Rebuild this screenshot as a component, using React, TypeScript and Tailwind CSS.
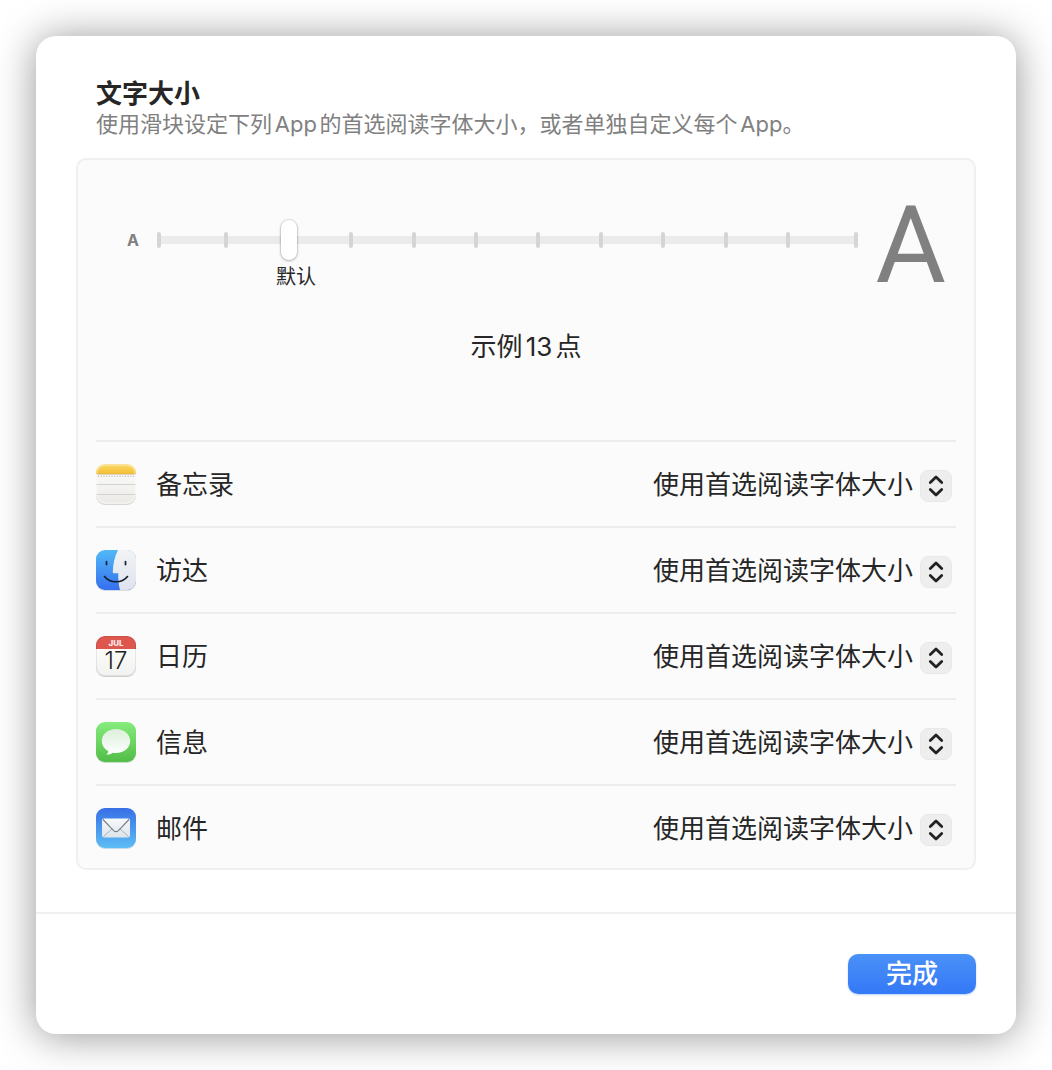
import { useState, type ReactNode } from "react";

function NotesIcon() {
  return (
    <svg viewBox="0 1 40 42" className="h-[42px] w-10 shrink-0" aria-hidden="true">
      <defs>
        <linearGradient id="notes-top" x1="0" y1="0" x2="0" y2="1">
          <stop offset="0" stopColor="#fad96b" />
          <stop offset="1" stopColor="#f6c033" />
        </linearGradient>
        <linearGradient id="notes-paper" x1="0" y1="0" x2="0" y2="1">
          <stop offset="0" stopColor="#fdfdfc" />
          <stop offset="1" stopColor="#ebeae7" />
        </linearGradient>
        <clipPath id="notes-clip">
          <rect x="0" y="1" width="40" height="40" rx="9" />
        </clipPath>
      </defs>
      <rect x="0" y="2" width="40" height="40" rx="9" fill="#d6d6d4" />
      <g clipPath="url(#notes-clip)">
        <rect y="1" width="40" height="40" fill="url(#notes-paper)" />
        <rect y="1" width="40" height="10" fill="url(#notes-top)" />
        <rect y="10.7" width="40" height="0.7" fill="#c4a565" />
        <path d="M2 13.2H40" stroke="#a3a3a1" strokeWidth="1" strokeDasharray="1 1.7" />
        <path d="M0 21.5H40M0 31.5H40" stroke="#d3d2cf" strokeWidth="1" />
        <rect x="1" y="2" width="38" height="38" rx="8" fill="none" stroke="#fff" strokeOpacity="0.6" />
      </g>
    </svg>
  );
}

function FinderIcon() {
  return (
    <svg viewBox="0 1 40 42" className="h-[42px] w-10 shrink-0" aria-hidden="true">
      <defs>
        <linearGradient id="finder-left" x1="0" y1="0" x2="0" y2="1">
          <stop offset="0" stopColor="#52b9f8" />
          <stop offset="1" stopColor="#356fee" />
        </linearGradient>
        <linearGradient id="finder-right" x1="0" y1="0" x2="0" y2="1">
          <stop offset="0" stopColor="#f2f3f5" />
          <stop offset="1" stopColor="#dfe3ee" />
        </linearGradient>
        <clipPath id="finder-clip">
          <rect x="0" y="1" width="40" height="40" rx="9" />
        </clipPath>
      </defs>
      <rect x="0" y="2" width="40" height="40" rx="9" fill="#d9dbe2" />
      <g clipPath="url(#finder-clip)">
        <rect y="1" width="40" height="40" fill="url(#finder-left)" />
        <path
          d="M22 1C18.5 8 17 15 16.8 23.3Q16.8 24.2 17.7 24.2H22.3C22.1 30 22.6 36 24 41H40V1Z"
          fill="url(#finder-right)"
        />
      </g>
      <path d="M10.5 12.7V15.5M29.5 12.7V15.5" stroke="#16243c" strokeWidth="1.8" strokeLinecap="round" />
      <path d="M8.5 27.5C14 34.5 26 34.5 31.5 27.5" stroke="#131c2c" strokeWidth="1.6" strokeLinecap="round" fill="none" />
    </svg>
  );
}

function CalendarIcon() {
  return (
    <svg viewBox="0 1 40 42" className="h-[42px] w-10 shrink-0" aria-hidden="true">
      <defs>
        <linearGradient id="calendar-paper" x1="0" y1="0" x2="0" y2="1">
          <stop offset="0" stopColor="#ffffff" />
          <stop offset="1" stopColor="#f2f2f0" />
        </linearGradient>
        <clipPath id="calendar-clip">
          <rect x="0" y="1" width="40" height="40" rx="9" />
        </clipPath>
      </defs>
      <rect x="0" y="2" width="40" height="40" rx="9" fill="#cfcfce" />
      <g clipPath="url(#calendar-clip)">
        <rect y="1" width="40" height="40" fill="url(#calendar-paper)" />
        <rect y="1" width="40" height="13" fill="#dd574e" />
      </g>
      <rect x="0.5" y="1.5" width="39" height="39" rx="8.5" fill="none" stroke="#000" strokeOpacity="0.08" />
      <text x="20" y="10.5" textAnchor="middle" fontSize="8" fontWeight="800" fill="#fdeeed" fontFamily="Inter, sans-serif">
        JUL
      </text>
      <text x="20" y="34" textAnchor="middle" fontSize="24" fontWeight="300" fill="#222" fontFamily="Inter, sans-serif">
        17
      </text>
    </svg>
  );
}

function MessagesIcon() {
  return (
    <svg viewBox="0 1 40 42" className="h-[42px] w-10 shrink-0" aria-hidden="true">
      <defs>
        <linearGradient id="messages-back" x1="0" y1="0" x2="0" y2="1">
          <stop offset="0" stopColor="#85ec7d" />
          <stop offset="1" stopColor="#53bd49" />
        </linearGradient>
        <linearGradient id="messages-bubble" x1="0" y1="0" x2="0" y2="1">
          <stop offset="0" stopColor="#dcefda" />
          <stop offset="1" stopColor="#ffffff" />
        </linearGradient>
      </defs>
      <rect x="0" y="2" width="40" height="40" rx="9" fill="#c9dcc7" />
      <rect x="0" y="1" width="40" height="40" rx="9" fill="url(#messages-back)" />
      <path
        d="M20 8C12 8 5.8 13.2 5.8 20C5.8 24.2 8.3 27.9 12.2 30C12.2 31.6 11.5 32.8 10.4 33.7C13.2 33.7 15.4 32.9 16.9 31.7C17.9 31.9 18.9 32 20 32C28 32 34.2 26.8 34.2 20C34.2 13.2 28 8 20 8Z"
        fill="url(#messages-bubble)"
      />
    </svg>
  );
}

function MailIcon() {
  return (
    <svg viewBox="0 1 40 42" className="h-[42px] w-10 shrink-0" aria-hidden="true">
      <defs>
        <linearGradient id="mail-back" x1="0" y1="0" x2="0" y2="1">
          <stop offset="0" stopColor="#386fe6" />
          <stop offset="1" stopColor="#5cbdf5" />
        </linearGradient>
        <linearGradient id="mail-paper" x1="0" y1="0" x2="0" y2="1">
          <stop offset="0" stopColor="#f7f9fb" />
          <stop offset="1" stopColor="#dde4ea" />
        </linearGradient>
      </defs>
      <rect x="0" y="2" width="40" height="40" rx="9" fill="#c6dbe9" />
      <rect x="0" y="1" width="40" height="40" rx="9" fill="url(#mail-back)" />
      <rect x="6" y="11.5" width="28" height="19" rx="2" fill="url(#mail-paper)" />
      <path d="M7.5 29.5L16.5 21.5M32.5 29.5L23.5 21.5" stroke="#a3acb4" strokeWidth="0.9" fill="none" />
      <path d="M7 12.5L17.6 23.6Q20 25.8 22.4 23.6L33 12.5" stroke="#737e88" strokeWidth="1.1" fill="none" />
    </svg>
  );
}

const apps: { id: string; name: string; icon: ReactNode }[] = [
  { id: "notes", name: "备忘录", icon: <NotesIcon /> },
  { id: "finder", name: "访达", icon: <FinderIcon /> },
  { id: "calendar", name: "日历", icon: <CalendarIcon /> },
  { id: "messages", name: "信息", icon: <MessagesIcon /> },
  { id: "mail", name: "邮件", icon: <MailIcon /> },
];

const innerTicks = Array.from({ length: 10 }, (_, i) => i);

function SizeSlider() {
  const [value, setValue] = useState(2);
  return (
    <div className="relative flex h-[42px] items-center">
      <div className="h-2 w-full bg-[#ebebeb]" />
      <div className="absolute inset-0 flex items-center" aria-hidden="true">
        <span className="h-4 w-1 rounded-full bg-[#d5d5d5]" />
        <div className="mx-[9%] flex flex-1 justify-between">
          {innerTicks.map((tick) => (
            <span key={tick} className="h-4 w-1 rounded-full bg-[#d5d5d5]" />
          ))}
        </div>
        <span className="h-4 w-1 rounded-full bg-[#d5d5d5]" />
      </div>
      <input
        type="range"
        aria-label="文字大小"
        min={0}
        max={11}
        value={value}
        onChange={(e) => setValue(Number(e.target.value))}
        className="absolute inset-0 m-0 h-full w-full cursor-pointer appearance-none bg-transparent [&::-webkit-slider-thumb]:h-10 [&::-webkit-slider-thumb]:w-4 [&::-webkit-slider-thumb]:appearance-none [&::-webkit-slider-thumb]:rounded-full [&::-webkit-slider-thumb]:bg-white [&::-webkit-slider-thumb]:shadow-[0_0_1px_1px_rgba(0,0,0,0.1),0_1px_3px_rgba(0,0,0,0.25)]"
      />
    </div>
  );
}

function AppRow({ id, name, icon }: { id: string; name: string; icon: ReactNode }) {
  return (
    <div className="flex items-center gap-5 border-t-2 border-[#ededed] pt-[22px] pr-1 pb-5 last:pb-[18px]">
      {icon}
      <label htmlFor={id} className="flex-1 text-[26px] leading-[42px]">
        {name}
      </label>
      <div className="relative flex items-center">
        <select
          id={id}
          className="h-[42px] cursor-pointer appearance-none bg-transparent pr-[39px] text-[26px] leading-[42px] [text-align-last:right]"
        >
          <option>使用首选阅读字体大小</option>
        </select>
        <span className="pointer-events-none absolute right-0 bottom-1 flex size-8 items-center justify-center rounded-lg border border-[#e9e9e9] bg-[#eeeeee]">
          <svg viewBox="0 0 16 24" className="h-6 w-4" fill="none" stroke="#222" strokeWidth="2.8" strokeLinecap="round" strokeLinejoin="round" aria-hidden="true">
            <path d="M2.3 8.5L8 3L13.7 8.5M2.3 15.5L8 21L13.7 15.5" />
          </svg>
        </span>
      </div>
    </div>
  );
}

export default function App() {
  return (
    <div
      lang="zh-CN"
      className="flex min-h-screen flex-col bg-white p-9 font-['Inter','Noto_Sans_CJK_SC',sans-serif] text-[#262626] [text-autospace:normal]"
    >
      <main className="flex flex-1 flex-col rounded-[20px] bg-white shadow-[0_2px_40px_rgba(0,0,0,0.42)]">
        <section className="flex-1 px-10 pt-11 pb-[42px]">
          <header className="px-5">
            <h1 className="text-[26px] leading-7 font-bold">文字大小</h1>
            <p className="text-[22px] leading-8 text-[#808080]">
              使用滑块设定下列App的首选阅读字体大小，或者单独自定义每个App。
            </p>
          </header>

          <div className="mt-[18px] rounded-[10px] border-2 border-[#f0f0f0] bg-[#fbfbfb] px-[18px]">
            <div className="flex pt-[59px] pr-2.5 pl-[31px]">
              <span className="w-[30px] text-[16px] leading-[42px] font-bold text-[#808080]">A</span>
              <div className="flex-1">
                <SizeSlider />
                <div className="ml-[17%] text-xl leading-8">默认</div>
              </div>
              <span className="ml-[18px] h-[74px] font-['Roboto',sans-serif] text-[108px] leading-[52px] text-[#808080]">A</span>
            </div>
            <p className="pt-[34px] pb-[73px] text-center text-[26px] leading-10">示例13点</p>
            {apps.map((app) => (
              <AppRow key={app.id} {...app} />
            ))}
          </div>
        </section>

        <footer className="flex justify-end border-t-2 border-[#f0f0f0] px-10 py-10">
          <button
            type="button"
            className="h-10 w-32 cursor-pointer rounded-[10px] bg-linear-to-b from-[#4a91f8] to-[#3478f6] text-[26px] leading-[38px] font-medium text-white shadow-[0_1px_2px_rgba(52,120,246,0.35)]"
          >
            完成
          </button>
        </footer>
      </main>
    </div>
  );
}
